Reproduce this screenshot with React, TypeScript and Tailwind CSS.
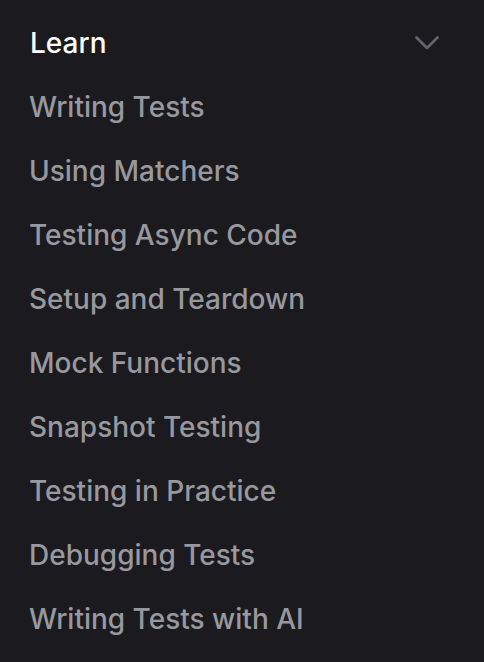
import React from 'react';

const items: string[] = [
  'Writing Tests',
  'Using Matchers',
  'Testing Async Code',
  'Setup and Teardown',
  'Mock Functions',
  'Snapshot Testing',
  'Testing in Practice',
  'Debugging Tests',
  'Writing Tests with AI',
];

const App: React.FC = () => {
  return (
    <div
      className="w-[484px] h-[662px] bg-[#1b1b1f] pt-[11px] overflow-hidden"
      style={{ fontFamily: 'Inter, "Noto Sans", sans-serif' }}
    >
      <div className="flex items-center justify-between h-16 pl-[30px] pr-[44px]">
        <span className="text-[28px] leading-[48px] font-medium text-white">Learn</span>
        <svg width="26" height="16" viewBox="0 0 26 16" fill="none" stroke="#63636a" strokeWidth="2.8" strokeLinecap="round" strokeLinejoin="round">
          <path d="M2.5 2.5L13 13L23.5 2.5" />
        </svg>
      </div>
      <ul className="flex flex-col">
        {items.map((item) => (
          <li key={item} className="h-16 flex items-center pl-[29px]">
            <span className="text-[28px] leading-[48px] font-medium text-[#98989f]">{item}</span>
          </li>
        ))}
      </ul>
    </div>
  );
};

export default App;
